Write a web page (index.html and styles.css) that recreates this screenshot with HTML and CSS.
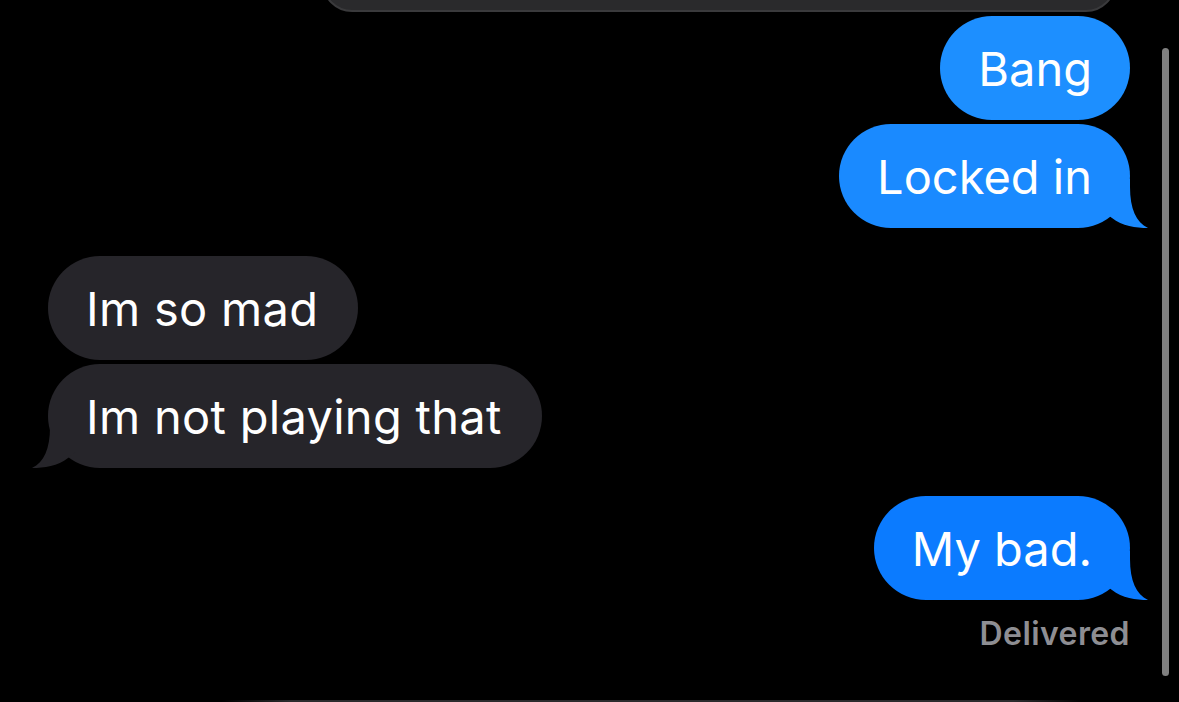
FILE: index.html
```html
<!DOCTYPE html>
<html lang="en">
<head>
    <meta charset="UTF-8">
    <meta name="viewport" content="width=device-width, initial-scale=1.0">
    <title>Messages</title>
    <link rel="stylesheet" href="styles.css">
</head>
<body>
    <div class="thread">
        <!-- bubble scrolled off the top -->
        <div class="prev-card"></div>

        <div class="bubble sent sent-1">Bang</div>
        <div class="bubble sent sent-2 tail">Locked in
            <svg class="tail-svg" viewBox="0 0 48 49"><path d="M0 0H30V8C30 30 36 43 48 49C36 49 22 47 12 39L0 30Z"/></svg>
        </div>

        <div class="bubble received gap">Im so mad</div>
        <div class="bubble received tail">Im not playing that
            <svg class="tail-svg" viewBox="0 0 48 49"><path d="M0 0H30V8C30 30 36 43 48 49C36 49 22 47 12 39L0 30Z"/></svg>
        </div>

        <div class="bubble sent sent-3 tail gap">My bad.
            <svg class="tail-svg" viewBox="0 0 48 49"><path d="M0 0H30V8C30 30 36 43 48 49C36 49 22 47 12 39L0 30Z"/></svg>
        </div>
        <div class="status">Delivered</div>

        <!-- text field peeking in at the bottom -->
        <div class="composer"></div>
    </div>

    <div class="scrollbar"></div>
</body>
</html>
```

FILE: styles.css
```css
body {
    margin: 0;
    background: #000;
    font-family: Inter, "Noto Sans", sans-serif;
    overflow: hidden;
}

.thread {
    position: relative;
    height: 702px;
    display: flex;
    flex-direction: column;
    padding: 0 49px 0 48px;
    box-sizing: border-box;
}

.prev-card {
    align-self: flex-end;
    width: 794px;
    height: 60px;
    margin-top: -48px;
    margin-right: 14px;
    background: #2a2a2c;
    border: 2px solid #3a3a3c;
    border-radius: 40px;
    box-sizing: border-box;
}

.bubble {
    position: relative;
    display: flex;
    align-items: center;
    height: 104px;
    margin-top: 4px;
    padding: 0 38px;
    border-radius: 52px;
    box-sizing: border-box;
    font-size: 47px;
    color: #fff;
    white-space: nowrap;
}

.bubble.gap {
    margin-top: 28px;
}

.sent {
    align-self: flex-end;
}

.sent-1 {
    background: #1d8fff;
    fill: #1d8fff;
}

.sent-2 {
    background: #1a8aff;
    fill: #1a8aff;
}

.sent-3 {
    background: #0b7bff;
    fill: #0b7bff;
}

.received {
    align-self: flex-start;
    padding: 0 40px 0 38px;
    background: #26252a;
    fill: #26252a;
    letter-spacing: 0.3px;
}

.tail-svg {
    position: absolute;
    bottom: 0;
    width: 48px;
    height: 49px;
}

.sent .tail-svg {
    right: -18px;
}

.received .tail-svg {
    left: -16px;
    transform: scaleX(-1);
}

.status {
    align-self: flex-end;
    margin-top: 15px;
    font-size: 32px;
    line-height: 38px;
    font-weight: 600;
    color: #8e8e93;
    letter-spacing: 0.4px;
}

.composer {
    align-self: flex-start;
    margin-top: auto;
    margin-left: 174px;
    width: 860px;
    height: 2px;
    background: linear-gradient(to right, #000, #2c2c2e 8%, #2c2c2e 92%, #000);
}

.scrollbar {
    position: absolute;
    top: 48px;
    right: 10px;
    width: 7px;
    height: 628px;
    border-radius: 4px;
    background: #808080;
}
```
